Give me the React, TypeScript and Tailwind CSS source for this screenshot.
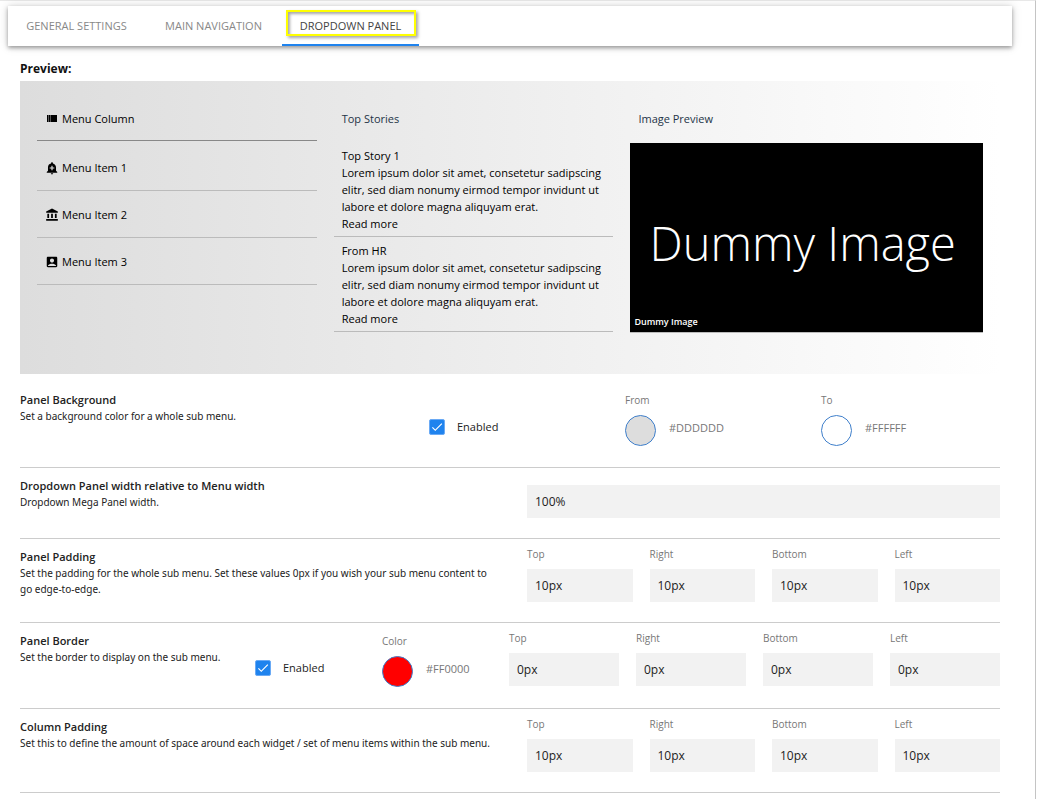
import { useState } from 'react';
import type { ReactNode } from 'react';
import { MdAccountBalance, MdAccountBox, MdAddAlert, MdCheck } from 'react-icons/md';

const tabs = ['GENERAL SETTINGS', 'MAIN NAVIGATION', 'DROPDOWN PANEL'];

const menuItems = [
  { label: 'Menu Item 1', icon: <MdAddAlert size={14} /> },
  { label: 'Menu Item 2', icon: <MdAccountBalance size={14} /> },
  { label: 'Menu Item 3', icon: <MdAccountBox size={14} /> },
];

const stories = ['Top Story 1', 'From HR'];
const storyText =
  'Lorem ipsum dolor sit amet, consetetur sadipscing elitr, sed diam nonumy eirmod tempor invidunt ut labore et dolore magna aliquyam erat.';

const sides = ['Top', 'Right', 'Bottom', 'Left'];

function ColumnIcon() {
  return (
    <svg viewBox="0 0 14 14" className="w-[14px] h-[14px]" fill="currentColor" aria-hidden="true">
      <path d="M2 3h1.6v7H2zM4 3h1v7H4zM5.4 3H12v7H5.4z" />
    </svg>
  );
}

function SettingTitle({ title, text }: { title: string; text: string }) {
  return (
    <div className="mt-[3px] leading-4">
      <h2 className="text-[11px] font-semibold text-[#222]">{title}</h2>
      <p className="pr-3 font-['Noto_Sans','Open_Sans',sans-serif] text-[10px] text-[#222]">{text}</p>
    </div>
  );
}

function EnabledBox() {
  const [checked, setChecked] = useState(true);

  return (
    <label className="mt-[30px] flex h-4 items-center gap-3 text-[11px] text-[#222] cursor-pointer">
      <span className="relative block w-4 h-4">
        <input
          type="checkbox"
          checked={checked}
          onChange={(e) => setChecked(e.target.checked)}
          className="block w-4 h-4 appearance-none rounded-[2px] border border-[#6aaaf5] bg-white checked:bg-[#1f83ee]"
        />
        {checked && <MdCheck size={14} className="absolute left-px top-px text-white pointer-events-none" />}
      </span>
      Enabled
    </label>
  );
}

function Swatch({ label, value, fill }: { label: string; value: string; fill: string }) {
  return (
    <div className="mt-[3px]">
      <p className="text-[10px] leading-4 font-medium text-[#777]">{label}</p>
      <div className="mt-[7px] flex gap-[13px]">
        <button type="button" aria-label={`${label} color`} className={`w-[31px] h-[31px] shrink-0 rounded-full border border-[#3f7fcb] ${fill}`} />
        <span className="mt-1 text-[11px] leading-[18px] text-[#777]">{value}</span>
      </div>
    </div>
  );
}

function SideInput({ id, label, value }: { id: string; label: string; value: string }) {
  return (
    <div className="min-w-0">
      <label htmlFor={id} className="block text-[10px] leading-4 font-medium text-[#777]">{label}</label>
      <input id={id} defaultValue={value} className="mt-[7px] block w-full h-[33px] bg-[#f2f2f2] px-2 text-[12px] text-[#222] outline-none" />
    </div>
  );
}

function PaddingRow({ id, title, text }: { id: string; title: string; text: string }) {
  return (
    <section className="grid grid-cols-[490fr_473fr] gap-[17px] border-b border-[#ccc] pt-[7px] pb-5">
      <SettingTitle title={title} text={text} />
      <div className="grid grid-cols-4 gap-[17px]">
        {sides.map((side) => (
          <SideInput key={side} id={`${id}-${side}`} label={side} value="10px" />
        ))}
      </div>
    </section>
  );
}

function ColumnHeader({ children }: { children: ReactNode }) {
  return <h3 className="flex h-[42px] items-center gap-[3px] px-2">{children}</h3>;
}

function Preview() {
  return (
    <div className="grid grid-cols-[280fr_280fr_353fr] gap-[17px] bg-linear-to-r from-[#ddd] to-white px-[17px] pt-[17px] pb-[41px] text-[11px] text-black">
      {/* Menu column */}
      <div>
        <div className="border-b border-[#888]">
          <ColumnHeader>
            <ColumnIcon />
            Menu Column
          </ColumnHeader>
        </div>
        <ul className="mt-[3px]">
          {menuItems.map((item) => (
            <li key={item.label} className="flex h-[47px] items-center gap-[3px] border-b border-[#bbb] px-2 pt-0.5">
              {item.icon}
              {item.label}
            </li>
          ))}
        </ul>
      </div>

      {/* Stories */}
      <div>
        <div className="text-[#243447]">
          <ColumnHeader>Top Stories</ColumnHeader>
        </div>
        <ul className="mt-0.5">
          {stories.map((story) => (
            <li key={story} className="border-b border-[#bbb] px-2 pt-[5px] pb-1 leading-[17px]">
              <h4>{story}</h4>
              <p>{storyText}</p>
              <a href="#" className="block">Read more</a>
            </li>
          ))}
        </ul>
      </div>

      {/* Image */}
      <div>
        <div className="text-[#243447]">
          <ColumnHeader>Image Preview</ColumnHeader>
        </div>
        <figure className="relative mt-[3px] flex aspect-[353/190] items-center justify-center border-b border-[#bbb] bg-black pt-3 pr-2 text-white">
          <span className="whitespace-nowrap text-[47px] leading-none font-light">Dummy Image</span>
          <figcaption className="absolute bottom-0.5 left-1 text-[9px] leading-4 font-semibold">Dummy Image</figcaption>
        </figure>
      </div>
    </div>
  );
}

export default function App() {
  const [activeTab, setActiveTab] = useState('DROPDOWN PANEL');

  return (
    <div className="min-h-screen bg-white pr-px font-['Open_Sans','Noto_Sans',sans-serif]">
      <main className="min-h-screen border-t border-r border-t-[#e8e8e8] border-r-[#c4c4c4] pt-[5px]">
        <nav className="ml-2 mr-[23px] flex h-10 bg-white shadow-[0_2px_4px_rgba(0,0,0,0.35),0_0_10px_rgba(0,0,0,0.15)]">
          {tabs.map((tab) => (
            <button
              key={tab}
              type="button"
              onClick={() => setActiveTab(tab)}
              className={`relative w-[137px] border-b-2 pt-0.5 text-[11px] whitespace-nowrap cursor-pointer ${
                activeTab === tab ? 'border-[#1f83ee] text-[#444]' : 'border-transparent text-[#888]'
              }`}
            >
              {tab}
              {tab === 'DROPDOWN PANEL' && (
                <span className="absolute left-1 top-1 w-[130px] h-[26px] border-2 border-[#ff0] shadow-[2px_2px_3px_rgba(0,0,0,0.35),inset_2px_2px_3px_rgba(0,0,0,0.35)]" />
              )}
            </button>
          ))}
        </nav>

        <div className="pl-5 pr-[35px]">
          <h1 className="pt-[14px] pb-[3px] text-[12px] leading-[18px] font-bold text-[#111]">Preview:</h1>
          <Preview />

          <section className="mt-2 grid grid-cols-[392fr_179fr_179fr_179fr] gap-[17px] border-b border-[#ccc] pt-[7px] pb-[21px]">
            <SettingTitle title="Panel Background" text="Set a background color for a whole sub menu." />
            <EnabledBox />
            <Swatch label="From" value="#DDDDDD" fill="bg-[#ddd]" />
            <Swatch label="To" value="#FFFFFF" fill="bg-white" />
          </section>

          <section className="grid grid-cols-[490fr_473fr] gap-[17px] border-b border-[#ccc] pt-[7px] pb-5">
            <SettingTitle title="Dropdown Panel width relative to Menu width" text="Dropdown Mega Panel width." />
            <input
              aria-label="Dropdown Panel width relative to Menu width"
              defaultValue="100%"
              className="mt-[10px] block w-full h-[33px] bg-[#f2f2f2] px-2 text-[12px] text-[#222] outline-none"
            />
          </section>

          <PaddingRow
            id="panel-padding"
            title="Panel Padding"
            text="Set the padding for the whole sub menu. Set these values 0px if you wish your sub menu content to go edge-to-edge."
          />

          <section className="grid grid-cols-[218fr_repeat(6,110fr)] gap-[17px] border-b border-[#ccc] pt-[7px] pb-[21px]">
            <SettingTitle title="Panel Border" text="Set the border to display on the sub menu." />
            <EnabledBox />
            <Swatch label="Color" value="#FF0000" fill="bg-[#f00]" />
            {sides.map((side) => (
              <SideInput key={side} id={`panel-border-${side}`} label={side} value="0px" />
            ))}
          </section>

          <PaddingRow
            id="column-padding"
            title="Column Padding"
            text="Set this to define the amount of space around each widget / set of menu items within the sub menu."
          />
        </div>
      </main>
    </div>
  );
}
